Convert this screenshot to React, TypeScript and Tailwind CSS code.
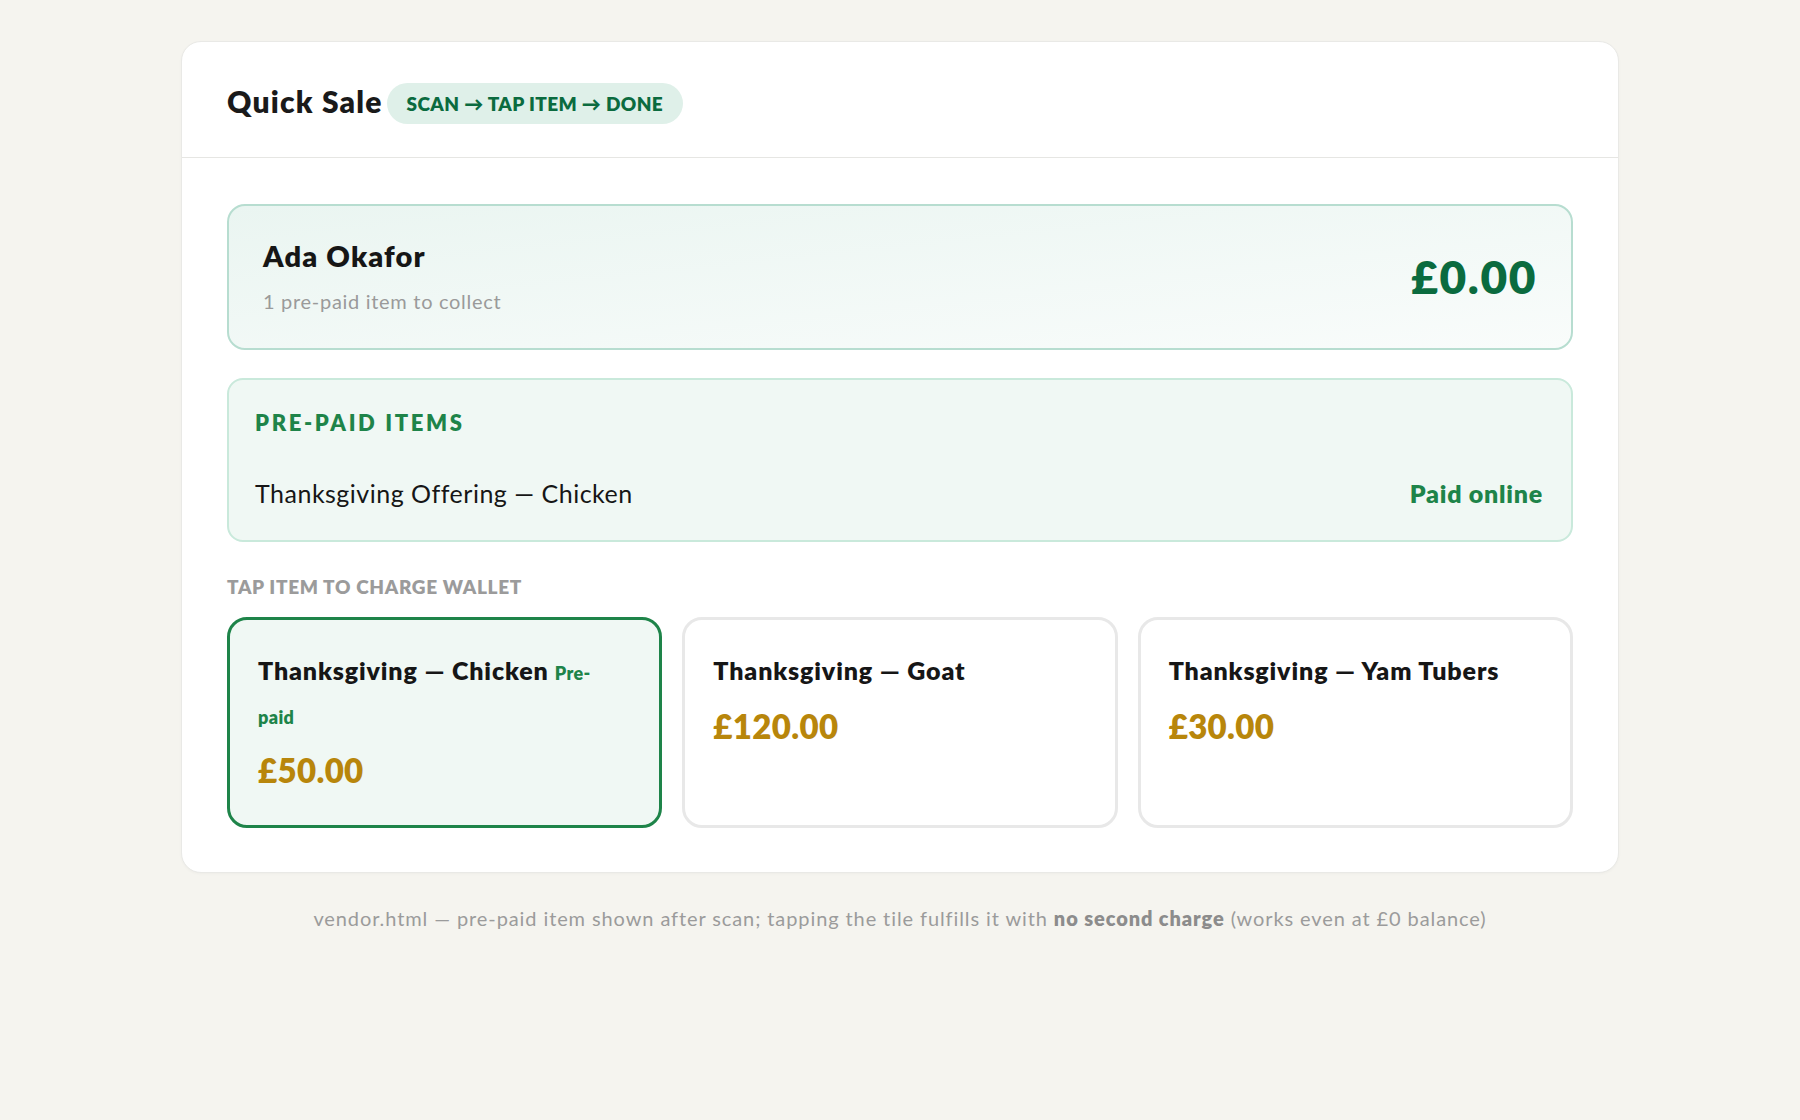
import React from "react";

type Tile = { name: string; price: string; prepaid?: boolean };

const tiles: Tile[] = [
  { name: "Thanksgiving — Chicken", price: "£50.00", prepaid: true },
  { name: "Thanksgiving — Goat", price: "£120.00" },
  { name: "Thanksgiving — Yam Tubers", price: "£30.00" },
];

const tagClass = "text-[18px] font-extrabold leading-none tracking-[0.02em] text-[#1e8449]";

export default function App() {
  return (
    <div
      className="min-h-screen bg-[#f5f4ef] pt-[41px] text-[#1a1a1a]"
      style={{ fontFamily: "Lato, 'Noto Sans', sans-serif" }}
    >
      <div className="mx-auto w-[1438px] rounded-[20px] border border-[#e9e9e6] bg-white shadow-[0_1px_3px_rgba(0,0,0,0.03)]">
        {/* Header */}
        <div className="flex h-[116px] items-center gap-[4px] border-b border-[#e6e6e3] px-[45px] pt-[2px]">
          <h1 className="text-[30px] font-extrabold leading-none tracking-[0.04em] text-[#1a1a1a]">
            Quick Sale
          </h1>
          <span className="mt-[6px] rounded-full bg-[#dff0e9] px-5 py-[9px] text-[19px] font-extrabold leading-[23px] tracking-[0.02em] text-[#0b6b3f]">
            SCAN → TAP ITEM → DONE
          </span>
        </div>

        {/* Body */}
        <div className="px-[45px] pb-[44px] pt-[46px]">
          {/* Customer */}
          <div className="flex h-[146px] items-center justify-between rounded-[18px] border-2 border-[#b7ddd0] bg-gradient-to-br from-[#eaf5f1] to-[#f9fcfb] pl-[34px] pr-[34px]">
            <div>
              <div className="text-[29px] font-extrabold leading-[32px] tracking-[0.04em] text-[#161616]">
                Ada Okafor
              </div>
              <div className="mt-[16px] text-[20px] leading-[26px] tracking-[0.035em] text-[#9a9a9a]">
                1 pre-paid item to collect
              </div>
            </div>
            <div className="text-[46px] font-extrabold leading-none tracking-[0.035em] text-[#0b6b3f]">
              £0.00
            </div>
          </div>

          {/* Pre-paid list */}
          <div className="mt-[28px] rounded-[16px] border-2 border-[#c9e9db] bg-[#f0f8f4] px-[26px] pb-[31px] pt-[30px]">
            <div className="text-[22px] font-extrabold leading-[26px] tracking-[0.12em] text-[#1e8449]">
              PRE-PAID ITEMS
            </div>
            <div className="mt-[41px] flex items-center justify-between">
              <span className="text-[25px] leading-[32px] tracking-[0.02em] text-[#161616]">
                Thanksgiving Offering — Chicken
              </span>
              <span className="pr-[2px] text-[25px] font-extrabold leading-[32px] tracking-[0.03em] text-[#1e8449]">
                Paid online
              </span>
            </div>
          </div>

          {/* Wallet tiles */}
          <div className="mt-[33px] text-[19px] font-extrabold leading-[24px] tracking-[0.035em] text-[#9b9b9b]">
            TAP ITEM TO CHARGE WALLET
          </div>
          <div className="mt-[18px] grid grid-cols-3 gap-5">
            {tiles.map((t) => (
              <div
                key={t.name}
                className={
                  t.prepaid
                    ? "h-[211px] rounded-[20px] border-[3px] border-[#1e8449] bg-[#f0f8f4] px-[28px] pt-[28px]"
                    : "h-[211px] rounded-[20px] border-[3px] border-[#e8e8e8] bg-white px-[28px] pt-[28px]"
                }
              >
                <div className="pr-[24px] text-[25px] font-extrabold leading-[44px] tracking-[0.035em] text-[#161616]">
                  {t.name}
                  {t.prepaid && (
                    <>
                      <span className={`ml-[6px] ${tagClass}`}>Pre-</span>
                      <span className={tagClass}>paid</span>
                    </>
                  )}
                </div>
                <div className="mt-[13px] text-[33px] font-extrabold leading-[42px] tracking-[0.01em] text-[#b8860b]">
                  {t.price}
                </div>
              </div>
            ))}
          </div>
        </div>
      </div>

      <p className="mt-[32px] text-center text-[20px] leading-[26px] tracking-[0.045em] text-[#9b9b9b]">
        vendor.html — pre-paid item shown after scan; tapping the tile fulfills it with{" "}
        <b className="font-extrabold text-[#8c8c8c]">no second charge</b> (works even at £0 balance)
      </p>
    </div>
  );
}
